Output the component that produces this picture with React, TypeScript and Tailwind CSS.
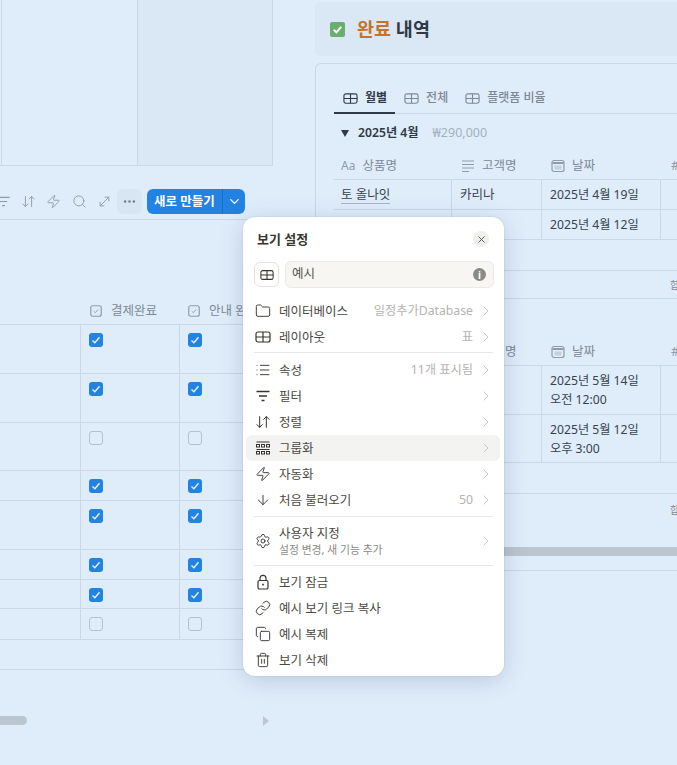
import { ArrowDown, ArrowDownUp, ChevronDown, ChevronRight, Copy, Ellipsis, Folder, Link, List, MoveDiagonal, Search, Settings, Trash2, X, Zap } from "lucide-react"
import type { ReactNode } from "react"

const leftRows = [
  { h: "h-[49px]", on: true },
  { h: "h-[49px]", on: true },
  { h: "h-[48px]", on: false },
  { h: "h-[30px]", on: true },
  { h: "h-[49px]", on: true },
  { h: "h-[30px]", on: true },
  { h: "h-[29px]", on: true },
  { h: "h-[31px]", on: false },
]

function TableIcon({ className }: { className?: string }) {
  return (
    <svg viewBox="0 0 16 14" fill="none" stroke="currentColor" strokeWidth="1.2" className={className}>
      <rect x="1" y="2" width="14" height="10" rx="2" />
      <path d="M1 7h14M8 2v10" />
    </svg>
  )
}

function FilterIcon({ className }: { className?: string }) {
  return (
    <svg viewBox="0 0 16 16" fill="none" stroke="currentColor" strokeWidth="1.3" className={className}>
      <path d="M1.5 3.5h13M4 8h8M6.5 12.5h3" />
    </svg>
  )
}

function GroupIcon({ className }: { className?: string }) {
  return (
    <svg viewBox="0 0 16 16" fill="none" stroke="currentColor" strokeWidth="1" className={className}>
      <path d="M1.5 2h13" />
      <rect x="1.5" y="4.5" width="3" height="2.5" />
      <rect x="6.5" y="4.5" width="3" height="2.5" />
      <rect x="11.5" y="4.5" width="3" height="2.5" />
      <path d="M1.5 9.5h13" />
      <rect x="1.5" y="11.5" width="3" height="2.5" />
      <rect x="6.5" y="11.5" width="3" height="2.5" />
      <rect x="11.5" y="11.5" width="3" height="2.5" />
    </svg>
  )
}

function LockIcon({ className }: { className?: string }) {
  return (
    <svg viewBox="0 0 16 16" fill="none" stroke="currentColor" strokeWidth="1.2" className={className}>
      <path d="M5 6.5V4.3a3 3 0 0 1 6 0v2.2" />
      <rect x="3" y="6.5" width="10" height="8.5" rx="1.6" />
      <path d="M8 9.7v1.8" strokeWidth="1.6" />
    </svg>
  )
}

function CalendarIcon() {
  return (
    <svg viewBox="0 0 14 14" className="h-[14px] w-[14px] shrink-0 text-[#8f9ba8]">
      <rect x="1" y="1.5" width="12" height="11" rx="2" fill="none" stroke="currentColor" strokeWidth="1.2" />
      <path d="M1.5 4h11" stroke="currentColor" strokeWidth="2" />
      <rect x="3.5" y="6.5" width="7" height="4" fill="currentColor" opacity="0.35" />
    </svg>
  )
}

function TextIcon() {
  return (
    <svg viewBox="0 0 14 14" fill="none" stroke="currentColor" strokeWidth="1" className="h-[14px] w-[14px] shrink-0 text-[#8f9ba8]">
      <path d="M1 2h12M1 5.5h12M1 9h12M1 12.5h7" />
    </svg>
  )
}

function CheckBox({ on }: { on: boolean }) {
  if (!on) return <div className="h-[14px] w-[14px] rounded-[3px] border border-[#b4c0cc]" />
  return (
    <div className="flex h-[14px] w-[14px] items-center justify-center rounded-[3px] bg-[#2383e2]">
      <svg viewBox="0 0 14 14" fill="none" stroke="#e6f1fc" strokeWidth="1.4" className="h-[14px] w-[14px]">
        <path d="M3.5 7.5l2.4 2.3 4.6-5.6" />
      </svg>
    </div>
  )
}

function CheckHead({ label }: { label: string }) {
  return (
    <div className="flex items-center gap-[9px] pl-[9px] whitespace-nowrap">
      <svg viewBox="0 0 12 12" fill="none" stroke="#8f9ba8" className="h-3 w-3 shrink-0">
        <rect x="0.75" y="0.75" width="10.5" height="10.5" rx="2" strokeWidth="1.2" />
        <path d="M3.6 6l1.7 1.7 3-3.4" strokeWidth="0.9" />
      </svg>
      <span className="text-[12.5px] text-[#7d8894]">{label}</span>
    </div>
  )
}

function LeftColumn() {
  return (
    <div className="w-[300px] shrink-0 overflow-hidden">
      <div className="flex h-[166px] w-[273px] border-r border-b border-[#c9d7e6]">
        <div className="w-[2px] border-r border-[#c9d7e6]" />
        <div className="w-[136px] border-r border-[#c9d7e6]" />
        <div className="flex-1 bg-[#dae7f5]" />
      </div>

      <div className="mt-[23px] flex h-[25px] w-[245px] items-center text-[#8f9ba8]">
        <div className="flex w-[117px] items-center justify-end">
          <FilterIcon className="mr-[10px] h-[15px] w-[15px] shrink-0" />
          <ArrowDownUp className="mr-[10px] h-[15px] w-[15px] shrink-0" strokeWidth={1.5} />
          <Zap className="mr-[11px] h-[15px] w-[15px] shrink-0" strokeWidth={1.5} />
          <Search className="mr-[10px] h-[15px] w-[15px] shrink-0" strokeWidth={1.5} />
          <MoveDiagonal className="mr-[5px] h-[15px] w-[15px] shrink-0" strokeWidth={1.5} />
        </div>
        <div className="flex h-[25px] w-[25px] items-center justify-center rounded-md bg-[#d8e5f3] text-[#6f7b88]">
          <Ellipsis className="h-[15px] w-[15px]" strokeWidth={2} />
        </div>
        <div className="ml-[5px] flex h-[25px] w-[98px] items-center rounded-md bg-[#2383e2] text-white">
          <span className="w-[76px] border-r border-[#1b6fc2] text-center text-[12.5px] leading-[25px] font-semibold">새로 만들기</span>
          <ChevronDown className="mx-auto h-[15px] w-[15px]" strokeWidth={2} />
        </div>
      </div>

      <div className="h-[6px] border-b border-[#c9d7e6]" />
      <div className="h-[78px]" />

      <div className="flex h-[26px] items-center">
        <div className="w-[81px]" />
        <div className="w-[98px]">
          <CheckHead label="결제완료" />
        </div>
        <div className="w-[120px]">
          <CheckHead label="안내 완료" />
        </div>
      </div>

      <div className="border-t border-[#c9d7e6]">
        {leftRows.map((row, i) => (
          <div key={i} className={`flex border-b border-[#c9d7e6] ${row.h}`}>
            <div className="w-[81px] border-r border-[#c9d7e6]" />
            <div className="w-[99px] border-r border-[#c9d7e6] pt-2 pl-2">
              <CheckBox on={row.on} />
            </div>
            <div className="flex-1 pt-2 pl-2">
              <CheckBox on={row.on} />
            </div>
          </div>
        ))}
      </div>
      <div className="h-[30px] border-b border-[#c9d7e6]" />

      <div className="mt-[46px] flex h-[9px] w-[269px] items-center justify-between">
        <div className="h-[9px] w-[27px] rounded-r-full bg-[#bcc6d0]" />
        <div className="h-0 w-0 border-y-[5px] border-l-[6px] border-y-transparent border-l-[#bcc6d0]" />
      </div>
    </div>
  )
}

function Tab({ label, active }: { label: string; active?: boolean }) {
  return (
    <div className={`flex h-[30px] items-center gap-[7px] pr-2 pl-[9px] whitespace-nowrap ${active ? "-mb-px border-b-2 border-[#2f3a46] text-[#2f3a46]" : "text-[#7d8894]"}`}>
      <TableIcon className="h-[15px] w-[15px] shrink-0" />
      <span className={`text-[12px] leading-[18px] ${active ? "font-semibold" : "font-medium"}`}>{label}</span>
    </div>
  )
}

function HeadCell({ icon, label, className }: { icon: ReactNode; label: string; className: string }) {
  return (
    <div className={`flex shrink-0 items-center gap-[7px] pl-[7px] whitespace-nowrap ${className}`}>
      {icon}
      <span className="text-[12.5px] text-[#7d8894]">{label}</span>
    </div>
  )
}

function TableHead() {
  return (
    <div className="flex h-[27px] items-center border-b border-[#c9d7e6]">
      <HeadCell className="w-[118px]" icon={<span className="text-[12px] text-[#8f9ba8]">Aa</span>} label="상품명" />
      <HeadCell className="w-[90px] pl-[9px]" icon={<TextIcon />} label="고객명" />
      <HeadCell className="w-[119px] pl-[9px]" icon={<CalendarIcon />} label="날짜" />
      <span className="pl-[10px] text-[13px] text-[#8f9ba8]">#</span>
    </div>
  )
}

function TableRow({ name, customer, date, time, h }: { name?: string; customer?: string; date: string; time?: string; h: string }) {
  return (
    <div className={`flex border-b border-[#c9d7e6] text-[12.5px] leading-[19px] text-[#37424e] ${h}`}>
      <div className="w-[118px] shrink-0 border-r border-[#c9d7e6] pt-[5px] pl-[7px]">
        {name && <span className="border-b border-[#a9b5c1]">{name}</span>}
      </div>
      <div className="w-[90px] shrink-0 border-r border-[#c9d7e6] pt-[5px] pl-2">{customer}</div>
      <div className="w-[119px] shrink-0 border-r border-[#c9d7e6] pt-[5px] pl-2 text-[12.2px] whitespace-nowrap">
        <div>{date}</div>
        {time && <div>{time}</div>}
      </div>
    </div>
  )
}

function RightColumn() {
  return (
    <div className="ml-[15px] w-[420px] shrink-0 pt-[2px]">
      <div className="flex h-[54px] items-center gap-3 rounded-l-md bg-[#dae7f5] pl-[15px]">
        <div className="flex h-[15px] w-[15px] items-center justify-center rounded-[2px] bg-[#6aae6f]">
          <svg viewBox="0 0 15 15" fill="none" stroke="white" strokeWidth="2" className="h-[15px] w-[15px]">
            <path d="M3.8 7.8l2.6 2.6 4.8-5.6" />
          </svg>
        </div>
        <h1 className="text-[18.5px] font-bold text-[#2f3a46]">
          <span className="text-[#c4732a]">완료</span> 내역
        </h1>
      </div>

      <div className="mt-[7px] rounded-tl-md border-t border-l border-[#c9d7e6] pl-[18px]">
        <div className="flex h-[50px] items-end border-b border-[#c9d7e6]">
          <Tab label="월별" active />
          <Tab label="전체" />
          <Tab label="플랫폼 비율" />
        </div>

        <div className="flex h-[39px] items-center pl-[7px]">
          <div className="h-0 w-0 border-x-[4px] border-t-[7px] border-x-transparent border-t-[#2f3a46]" />
          <span className="ml-[9px] text-[12.2px] font-semibold text-[#2f3a46]">2025년 4월</span>
          <span className="ml-[14px] text-[12.5px] text-[#a5b0bb]">₩290,000</span>
        </div>
        <TableHead />
        <TableRow name="토 올나잇" customer="카리나" date="2025년 4월 19일" h="h-[30px]" />
        <TableRow date="2025년 4월 12일" h="h-[30px]" />
        <div className="relative">
          <div className="h-[31px] border-b border-[#c9d7e6]" />
          <div className="absolute top-[38px] left-[336px] text-[10px] leading-[14px] text-[#7d8894]">합계</div>
          <div className="h-[28px] border-b border-[#c9d7e6]" />
        </div>

        <div className="flex h-[40px] items-center pl-[7px]">
          <div className="h-0 w-0 border-x-[4px] border-t-[7px] border-x-transparent border-t-[#2f3a46]" />
          <span className="ml-[9px] text-[12.2px] font-semibold text-[#2f3a46]">2025년 5월</span>
        </div>
        <TableHead />
        <TableRow date="2025년 5월 14일" time="오전 12:00" h="h-[49px]" />
        <TableRow date="2025년 5월 12일" time="오후 3:00" h="h-[48px]" />
        <div className="relative">
          <div className="h-[31px] border-b border-[#c9d7e6]" />
          <div className="absolute top-[40px] left-[336px] text-[10px] leading-[14px] text-[#7d8894]">합계</div>
        </div>
        <div className="mt-[53px] h-[9px] bg-[#bac5cf]" />
        <div className="mt-[14px] border-b border-[#c9d7e6]" />
      </div>
    </div>
  )
}

function MenuRow({ icon, label, value, sub, active, noArrow }: { icon: ReactNode; label: string; value?: string; sub?: string; active?: boolean; noArrow?: boolean }) {
  return (
    <div className={`mr-1 ml-[3px] flex items-center rounded-md pr-[6px] pl-[9px] ${sub ? "h-[42px]" : "h-[26px]"} ${active ? "bg-[#f3f3f1]" : ""}`}>
      <div className="flex w-[24px] shrink-0 items-center text-[#37352f]">{icon}</div>
      <div className="min-w-0 flex-1">
        <div className="text-[12.5px] leading-[17px] text-[#4a4843]">{label}</div>
        {sub && <div className="text-[10.8px] leading-[16px] text-[#8b8985]">{sub}</div>}
      </div>
      {value && <span className="mr-[5px] text-[12.25px] text-[#b4b3af]">{value}</span>}
      {!noArrow && <ChevronRight className="h-4 w-4 text-[#c4c3bf]" strokeWidth={1.4} />}
    </div>
  )
}

function Divider() {
  return <div className="mx-[11px] h-px bg-[#e9e8e5]" />
}

function ViewSettings() {
  const ic = "h-[16px] w-[16px]"
  return (
    <div className="absolute top-[217px] left-[243px] h-[459px] w-[261px] rounded-xl bg-white shadow-[0_4px_24px_rgba(15,40,70,0.18),0_0_0_1px_rgba(15,40,70,0.04)]">
      <div className="flex h-[44px] items-center justify-between pr-[15px] pl-[14px]">
        <h2 className="pt-px text-[13px] font-bold text-[#37352f]">보기 설정</h2>
        <div className="flex h-4 w-4 items-center justify-center rounded-full bg-[#efefed] text-[#55534e]">
          <X className="h-[11px] w-[11px]" strokeWidth={2} />
        </div>
      </div>

      <div className="mr-[10px] ml-[11px] flex h-[27px] gap-[6px]">
        <div className="flex h-[25px] w-[25px] shrink-0 translate-y-px items-center justify-center rounded-md border border-[#e3e2df] text-[#37352f]">
          <TableIcon className="h-[14px] w-[14px]" />
        </div>
        <div className="flex flex-1 items-center justify-between rounded-md border border-[#eceae6] bg-[#f7f6f3] pr-[7px] pl-[6px]">
          <span className="text-[12.5px] text-[#55534e]">예시</span>
          <div className="flex h-[13px] w-[13px] items-center justify-center rounded-full bg-[#8a8a86] text-[10px] leading-none font-bold text-white">i</div>
        </div>
      </div>

      <div className="mt-[10px]">
        <MenuRow icon={<Folder className={ic} strokeWidth={1.4} />} label="데이터베이스" value="일정추가Database" />
        <MenuRow icon={<TableIcon className={ic} />} label="레이아웃" value="표" />
        <div className="h-[2px]" />
        <Divider />
        <div className="h-[4px]" />
        <MenuRow icon={<List className={ic} strokeWidth={1.4} />} label="속성" value="11개 표시됨" />
        <MenuRow icon={<FilterIcon className={ic} />} label="필터" />
        <MenuRow icon={<ArrowDownUp className={ic} strokeWidth={1.5} />} label="정렬" />
        <MenuRow icon={<GroupIcon className={ic} />} label="그룹화" active />
        <MenuRow icon={<Zap className={ic} strokeWidth={1.4} />} label="자동화" />
        <MenuRow icon={<ArrowDown className={ic} strokeWidth={1.4} />} label="처음 불러오기" value="50" />
        <div className="h-[3px]" />
        <Divider />
        <div className="h-[3px]" />
        <MenuRow icon={<Settings className={ic} strokeWidth={1.4} />} label="사용자 지정" sub="설정 변경, 새 기능 추가" />
        <div className="h-[3px]" />
        <Divider />
        <div className="h-[3px]" />
        <MenuRow icon={<LockIcon className={ic} />} label="보기 잠금" noArrow />
        <MenuRow icon={<Link className={ic} strokeWidth={1.4} />} label="예시 보기 링크 복사" noArrow />
        <MenuRow icon={<Copy className={ic} strokeWidth={1.4} />} label="예시 복제" noArrow />
        <MenuRow icon={<Trash2 className={ic} strokeWidth={1.4} />} label="보기 삭제" noArrow />
      </div>
    </div>
  )
}

export default function App() {
  return (
    <div className="relative flex h-[765px] w-[677px] overflow-hidden bg-[#dfedfb] font-['Noto_Sans','Noto_Sans_CJK_KR',sans-serif]">
      <LeftColumn />
      <RightColumn />
      <ViewSettings />
    </div>
  )
}
